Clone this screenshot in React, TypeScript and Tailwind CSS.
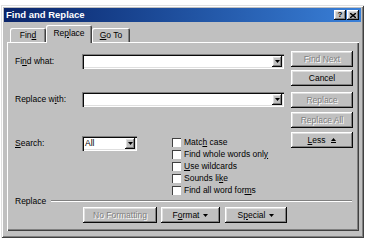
import type { ReactNode } from 'react';

const raised =
  'shadow-[inset_-1px_-1px_#0a0a0a,inset_1px_1px_#ffffff,inset_-2px_-2px_#808080,inset_2px_2px_#dfdfdf]';
const sunken =
  'shadow-[inset_1px_1px_#808080,inset_2px_2px_#0a0a0a,inset_-1px_-1px_#ffffff,inset_-2px_-2px_#dfdfdf]';

function U({ children }: { children: ReactNode }) {
  return <span className="underline underline-offset-[1px] decoration-[1px]">{children}</span>;
}

function Arrow() {
  return (
    <svg width="5" height="3" viewBox="0 0 5 3">
      <path d="M0 0h5L2.5 3z" fill="#000" />
    </svg>
  );
}

function Btn({ children, className = '', disabled = false }: { children: ReactNode; className?: string; disabled?: boolean }) {
  return (
    <div
      className={`h-[16px] flex items-center justify-center bg-[#c0c0c0] ${raised} ${className} ${
        disabled ? 'text-[#808080] [text-shadow:1px_1px_0_#ffffff]' : 'text-black'
      }`}
    >
      {children}
    </div>
  );
}

function Combo({ className = '', value = '' }: { className?: string; value?: string }) {
  return (
    <div className={`h-[15px] bg-white flex items-center pl-[3px] pr-[2px] ${sunken} ${className}`}>
      <span className="flex-1">{value}</span>
      <div className={`w-[10px] h-[11px] flex items-center justify-center bg-[#c0c0c0] ${raised}`}>
        <Arrow />
      </div>
    </div>
  );
}

function Check({ children }: { children: ReactNode }) {
  return (
    <div className="h-[12px] flex items-center gap-[3px]">
      <div className="w-[9px] h-[9px] bg-white shadow-[inset_1px_1px_#404040,inset_-1px_-1px_#ffffff]" />
      <span>{children}</span>
    </div>
  );
}

export default function App() {
  return (
    <div className="w-[365px] h-[240px] bg-white overflow-hidden font-['Liberation_Sans',Arial,sans-serif] text-[8.5px] leading-none text-black">
      <div className="ml-[1px] mt-[5px] w-[363px] h-[233px] bg-[#c0c0c0] p-[3px] flex flex-col shadow-[inset_1px_1px_#dfdfdf,inset_-1px_-1px_#404040,inset_2px_2px_#ffffff,inset_-2px_-2px_#808080]">
        {/* title bar */}
        <div className="h-[14px] flex items-center bg-linear-to-r from-[#0a246a] to-[#3a80d8] pl-[2px] pr-[2px]">
          <span className="flex-1 text-white font-bold text-[9.5px]">Find and Replace</span>
          <div className={`w-[12px] h-[10px] flex items-center justify-center bg-[#c0c0c0] ${raised} font-bold text-[8px]`}>?</div>
          <div className={`ml-[1px] w-[12px] h-[10px] flex items-center justify-center bg-[#c0c0c0] ${raised}`}>
            <svg width="6" height="5" viewBox="0 0 6 5">
              <path d="M0 0l6 5M6 0L0 5" stroke="#000" strokeWidth="1.4" />
            </svg>
          </div>
        </div>

        {/* tabs */}
        <div className="h-[20px] flex items-end pl-[6px]">
          <div className="w-[36px] h-[14px] rounded-t-[2px] flex items-center justify-center shadow-[inset_1px_1px_#ffffff,inset_-1px_0_#404040,inset_-2px_0_#808080]">
            Fin<U>d</U>
          </div>
          <div className="relative z-10 -mb-[1px] w-[46px] h-[18px] rounded-t-[2px] bg-[#c0c0c0] flex items-center justify-center pb-[1px] shadow-[inset_1px_1px_#ffffff,inset_-1px_0_#404040,inset_-2px_0_#808080]">
            Re<U>p</U>lace
          </div>
          <div className="w-[38px] h-[14px] rounded-t-[2px] flex items-center justify-center shadow-[inset_1px_1px_#ffffff,inset_-1px_0_#404040,inset_-2px_0_#808080]">
            <U>G</U>o To
          </div>
        </div>

        {/* panel */}
        <div className="ml-[3px] w-[352px] h-[189px] flex flex-col shadow-[inset_1px_1px_#ffffff,inset_-1px_-1px_#404040,inset_-2px_-2px_#808080]">
          <div className="h-[154px] flex pl-[8px]">
            <div className="w-[269px] pt-[12px] flex flex-col">
              <div className="h-[15px] flex items-center">
                <span className="w-[67px]">
                  Fi<U>n</U>d what:
                </span>
                <Combo className="flex-1" />
              </div>
              <div className="mt-[23px] h-[15px] flex items-center">
                <span className="w-[67px]">
                  Replace w<U>i</U>th:
                </span>
                <Combo className="flex-1" />
              </div>
              <div className="mt-[29px] flex items-start">
                <span className="w-[67px] h-[15px] flex items-center">
                  <U>S</U>earch:
                </span>
                <Combo className="w-[55px]" value="All" />
                <div className="ml-[35px] flex flex-col">
                  <Check>
                    Matc<U>h</U> case
                  </Check>
                  <Check>
                    Find whole words onl<U>y</U>
                  </Check>
                  <Check>
                    <U>U</U>se wildcards
                  </Check>
                  <Check>
                    Sounds li<U>k</U>e
                  </Check>
                  <Check>
                    Find all word for<U>m</U>s
                  </Check>
                </div>
              </div>
            </div>
            <div className="ml-[7px] w-[62px] pt-[9px] flex flex-col">
              <Btn disabled>Find Next</Btn>
              <Btn className="mt-[3px]">Cancel</Btn>
              <Btn className="mt-[6px]" disabled>
                Replace
              </Btn>
              <Btn className="mt-[4px]" disabled>
                Replace All
              </Btn>
              <Btn className="mt-[4px] gap-[6px]">
                <span>
                  <U>L</U>ess
                </span>
                <svg width="5" height="5" viewBox="0 0 5 5">
                  <path d="M0 3h5L2.5 0z" fill="#000" />
                  <path d="M0 4.5h5" stroke="#000" strokeWidth="1" />
                </svg>
              </Btn>
            </div>
          </div>

          <div className="h-[10px] flex items-center pl-[8px] pr-[7px]">
            <span>Replace</span>
            <div className="ml-[5px] flex-1 h-[2px] border-t border-[#808080] border-b border-b-white" />
          </div>

          <div className="mt-[1px] flex pl-[76px] gap-[4px]">
            <Btn className="w-[74px]" disabled>
              No Formatting
            </Btn>
            <Btn className="w-[59px] gap-[4px]">
              <span>
                F<U>o</U>rmat
              </span>
              <Arrow />
            </Btn>
            <Btn className="ml-[1px] w-[62px] gap-[4px]">
              <span>
                S<U>p</U>ecial
              </span>
              <Arrow />
            </Btn>
          </div>
        </div>
      </div>
    </div>
  );
}
